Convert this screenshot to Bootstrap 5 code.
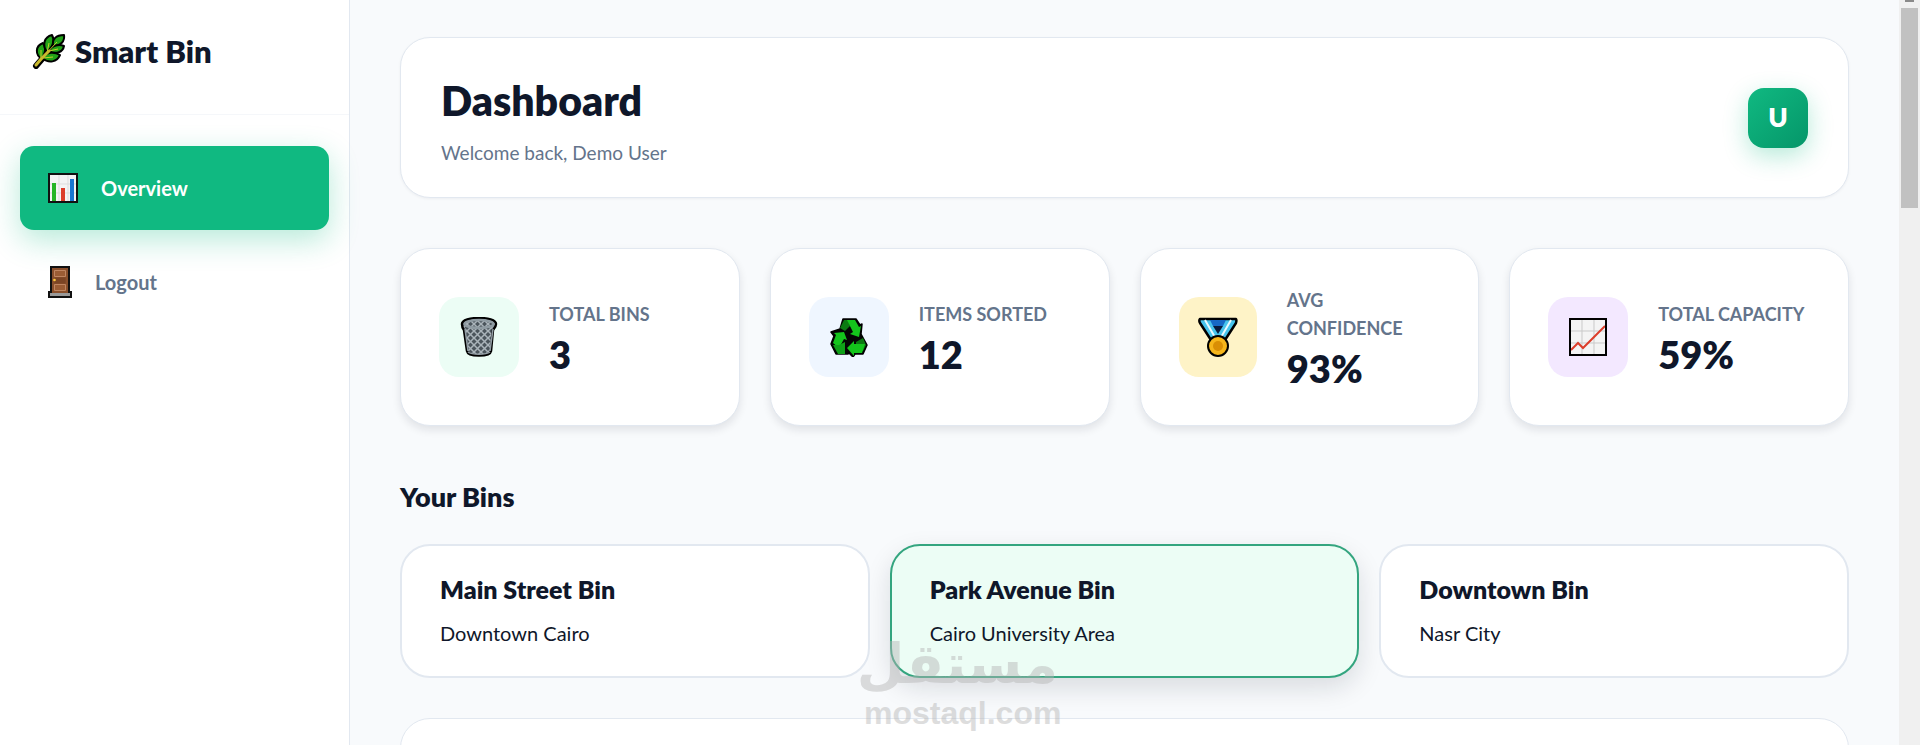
<!DOCTYPE html>
<html lang="en">
<head>
<meta charset="utf-8">
<meta name="viewport" content="width=device-width, initial-scale=1">
<title>Smart Bin – Dashboard</title>
<link href="https://cdn.jsdelivr.net/npm/bootstrap@5.3.0/dist/css/bootstrap.min.css" rel="stylesheet">
<style>
:root{--ink:#0f172a;--muted-ink:#64748b;--line:#e2e8f0;--brand:#10b981}
body{font-family:Lato,"Open Sans",sans-serif;background:#f8fafc;color:var(--ink)}
.app-shell{height:100vh}
.side{width:350px;border-right:1px solid var(--line)}
.side-head{padding:32px 32px 44px;border-bottom:1px solid #f5f7fa;gap:9px}
.brand-name{font-size:31px;line-height:38px;font-weight:800}
.side-nav{padding:31px 20px;gap:10px}
.side-link{height:84px;border-radius:14px;padding:0 28px;gap:23px;font-size:20px;font-weight:700;color:var(--muted-ink);text-decoration:none}
.side-link.current{background:var(--brand);color:#fff;box-shadow:0 10px 30px rgba(16,185,129,.3)}
.main-area{padding:37px 50px 0;min-width:0}
.panel{background:#fff;border:1px solid var(--line);border-radius:30px}
.top-panel{padding:32px 40px;box-shadow:0 1px 3px rgba(15,23,42,.05);margin-bottom:50px}
.top-panel h1{font-size:41px;line-height:62px;font-weight:800}
.top-panel p{font-size:19px;line-height:25px;margin-top:8px;color:var(--muted-ink)}
.avatar{width:60px;height:60px;border:0;border-radius:16px;background:linear-gradient(135deg,#10b981,#059669);color:#fff;font-size:26px;font-weight:800;box-shadow:0 8px 24px rgba(16,185,129,.3)}
.stat-grid{display:grid;grid-template-columns:repeat(4,minmax(0,1fr));gap:30px;margin-bottom:50px}
.stat{height:178px;padding:0 38px;gap:30px;box-shadow:0 4px 8px rgba(15,23,42,.1)}
.stat-icon{width:80px;height:80px;border-radius:20px}
.stat-text{padding-bottom:2px}
.stat-label{font-size:18px;line-height:28px;font-weight:700;color:var(--muted-ink);margin-bottom:8px}
.stat-value{font-size:38px;line-height:36px;font-weight:800}
.tint-green{background:#ecfdf5}.tint-blue{background:#eff6ff}.tint-amber{background:#fef3c7}.tint-purple{background:#f3e8ff}
.section-title{font-size:27px;line-height:42px;font-weight:800;margin-bottom:26px}
.bin-grid{display:grid;grid-template-columns:repeat(3,minmax(0,1fr));gap:20px;margin-bottom:40px}
.bin{height:134px;padding:0 38px;background:#fff;border:2px solid var(--line);border-radius:30px;text-align:left;color:var(--ink)}
.bin.chosen{background:#ecfdf5;border-color:#34a57f;box-shadow:0 10px 26px rgba(15,23,42,.13)}
.bin-name{font-size:25px;line-height:32px;font-weight:800;margin-bottom:12px}
.bin-place{font-size:20px;line-height:32px}
.next-panel{height:300px}
.scroll-track{width:21px;background:#f0f0f0;padding:0 2px}
.scroll-arrow{width:9px;height:2px;margin:0 auto 6px;background:#8a8a8a}
.scroll-thumb{height:200px;background:#c1c1c1}
.watermark{position:absolute;left:45%;bottom:15px;width:194px;color:#b4b4b4;opacity:.45;text-align:center;white-space:nowrap;pointer-events:none}
.wm-ar{font:700 55px/64px "DejaVu Sans",sans-serif}
.wm-en{font:700 32px/34px "Liberation Sans",sans-serif}
</style>
</head>
<body>
<div class="app-shell d-flex overflow-hidden position-relative">
  <aside class="side bg-white flex-shrink-0">
    <div class="side-head d-flex align-items-center">
      <svg width="34" height="36" viewBox="0 0 34 36" aria-hidden="true">
        <g id="leaf-shape" stroke-linejoin="round">
          <path d="M4 33L10 26L25 10" fill="none" stroke="#000" stroke-width="6" stroke-linecap="round"/>
          <g fill="#22a318" stroke="#000" stroke-width="2">
            <path d="M10 26C3 22 3 13 11 10C14 14 14 18 10 26Z"/>
            <path d="M15 19C10 12 12 4 20 2C23 8 22 12 15 19Z"/>
            <path d="M21 13C20 6 24 2 32 2C33 8 29 13 21 13Z"/>
            <path d="M17 18C20 12 27 11 32 13C31 19 24 22 17 18Z"/>
            <path d="M10 25C15 18 23 19 28 22C25 29 17 31 10 25Z"/>
          </g>
          <path d="M4 32L10 25L25 9M9 26L9 17M15 20L17 10M17 18L26 16M11 25L21 24" fill="none" stroke="#c3cf2a" stroke-width="1"/>
          <path d="M4 32L10 25L17 18" fill="none" stroke="#c9b92e" stroke-width="3" stroke-linecap="round"/>
        </g>
      </svg>
      <span class="brand-name">Smart Bin</span>
    </div>
    <nav class="side-nav d-flex flex-column">
      <a href="#" class="side-link current d-flex align-items-center" aria-current="page">
        <svg width="30" height="30" viewBox="0 0 30 30" aria-hidden="true"><path d="M1 1h28v28H1z" fill="#f4f4f4" stroke="#111" stroke-width="2"/><path d="M11 2v26M20 2v26M2 11h26M2 20h26" stroke="#ddd"/><path d="M4 10h4v18H4z" fill="#25b525"/><path d="M13 15h4v13h-4z" fill="#dc3d2a"/><path d="M22 6h4v22h-4z" fill="#1877d2"/></svg>
        <span>Overview</span>
      </a>
      <a href="#" class="side-link d-flex align-items-center">
        <svg width="24" height="32" viewBox="0 0 24 32" aria-hidden="true"><path d="M3 1h18v25h2v5H1v-5h2z" fill="#8a4f2b" stroke="#111" stroke-width="2"/><path d="M2 27h20v3H2z" fill="#999"/><path d="M6.500 4.500h11v6h-11zM6.500 18.500h11v6h-11z" fill="#9b5c34" stroke="#c08560"/><path d="M6.500 11.500h11v6h-11z" fill="#7b4424"/><circle cx="6.500" cy="14" r="1.300" fill="#ffc83d"/></svg>
        <span>Logout</span>
      </a>
    </nav>
  </aside>

  <main class="main-area flex-grow-1 overflow-hidden">
    <header class="panel top-panel d-flex align-items-center justify-content-between">
      <div><h1 class="mb-0">Dashboard</h1><p class="mb-0">Welcome back, Demo User</p></div>
      <button type="button" class="avatar p-0">U</button>
    </header>

    <section class="stat-grid">
      <div class="panel stat d-flex align-items-center">
        <div class="stat-icon tint-green d-flex align-items-center justify-content-center">
          <svg width="38" height="40" viewBox="0 0 38 40" aria-hidden="true"><defs><pattern id="mesh" width="7" height="7" patternUnits="userSpaceOnUse"><path d="M0 0h7v7H0z" fill="#4b555c"/><path d="M0 0l7 7M7 0l-7 7" stroke="#aab4ba" stroke-width="1.500"/></pattern></defs><path d="M2 7C2 -1 36 -1 36 7C36 10 34 12 33 13L31 34C30 40 8 40 7 34L4 13C3 12 2 10 2 7Z" fill="url(#mesh)" stroke="#000" stroke-width="2.500"/><ellipse cx="19" cy="7" rx="14.500" ry="4" fill="url(#mesh)" stroke="#8f9ba2" stroke-width="2.500"/><path d="M5 12l3 22M33 12l-3 22M8 35c4 3 18 3 22 0" stroke="#929da4" stroke-width="1.500" fill="none"/></svg>
        </div>
        <div class="stat-text"><div class="stat-label">TOTAL BINS</div><div class="stat-value">3</div></div>
      </div>
      <div class="panel stat d-flex align-items-center">
        <div class="stat-icon tint-blue d-flex align-items-center justify-content-center">
          <svg width="38" height="40" viewBox="0 0 38 40" aria-hidden="true"><path d="M13 2h13l4 6 2-1-1 10 6 11-4 9H25l-2 3-4-4-1 1H6L1 27l3-8-3-4 9-3z" fill="#050505" stroke="#000" stroke-width="1.500" stroke-linejoin="round"/><path d="M14 3l4 0 2 6-5 5-5-3z" fill="#0b7a12"/><path d="M17 3h8l4 7 2-1-2 11-9-3 3-2z" fill="#14c51c"/><path d="M4 16l10-1 3 8-3-1-5 9-6-5 3-8z" fill="#14c51c"/><path d="M9 28l6-3v12H8l-5-9z" fill="#0fa018"/><path d="M26 25l7-4 3 7-3 6-7-4z" fill="#0b7a12"/><path d="M17 31l7-7v3h11l-3 9h-8v3z" fill="#14c51c"/></svg>
        </div>
        <div class="stat-text"><div class="stat-label">ITEMS SORTED</div><div class="stat-value">12</div></div>
      </div>
      <div class="panel stat d-flex align-items-center">
        <div class="stat-icon tint-amber d-flex align-items-center justify-content-center">
          <svg width="40" height="40" viewBox="0 0 40 40" aria-hidden="true"><path d="M2 2h36c1 2 0 3 0 4L27 23H13L2 6C1 4 1 3 2 2z" fill="#47c4ec" stroke="#000" stroke-width="2.500" stroke-linejoin="round"/><path d="M12 3h16l-3 6H15z" fill="#1668c5"/><path d="M15 9h10l-5 8z" fill="#081a3c"/><path d="M7 3l11 19M33 3L22 22" stroke="#e8faff" stroke-width="2"/><circle cx="20" cy="29" r="10" fill="#f5b51b" stroke="#000" stroke-width="2"/><circle cx="20" cy="29" r="5" fill="#d98e04"/></svg>
        </div>
        <div class="stat-text"><div class="stat-label">AVG CONFIDENCE</div><div class="stat-value">93%</div></div>
      </div>
      <div class="panel stat d-flex align-items-center">
        <div class="stat-icon tint-purple d-flex align-items-center justify-content-center">
          <svg width="38" height="38" viewBox="0 0 38 38" aria-hidden="true"><path d="M1 1h36v36H1z" fill="#f4f4f4"/><path d="M13 2v34M25 2v34M2 13h34M2 25h34" stroke="#c9c9c9"/><path d="M2 32l7-7 5 5L36 8" fill="none" stroke="#dc3d2a" stroke-width="2"/><path d="M1 1h36v36H1z" fill="none" stroke="#000" stroke-width="2"/></svg>
        </div>
        <div class="stat-text"><div class="stat-label">TOTAL CAPACITY</div><div class="stat-value">59%</div></div>
      </div>
    </section>

    <h2 class="section-title">Your Bins</h2>
    <section class="bin-grid">
      <button type="button" class="bin"><span class="bin-name d-block">Main Street Bin</span><span class="bin-place d-block">Downtown Cairo</span></button>
      <button type="button" class="bin chosen" aria-pressed="true"><span class="bin-name d-block">Park Avenue Bin</span><span class="bin-place d-block">Cairo University Area</span></button>
      <button type="button" class="bin"><span class="bin-name d-block">Downtown Bin</span><span class="bin-place d-block">Nasr City</span></button>
    </section>
    <section class="panel next-panel"></section>
  </main>

  <div class="scroll-track flex-shrink-0" aria-hidden="true"><div class="scroll-arrow"></div><div class="scroll-thumb"></div></div>
  <div class="watermark"><div class="wm-ar" lang="ar" dir="rtl">مستقل</div><div class="wm-en">mostaql.com</div></div>
</div>
<script src="https://cdn.jsdelivr.net/npm/bootstrap@5.3.0/dist/js/bootstrap.bundle.min.js"></script>
</body>
</html>
